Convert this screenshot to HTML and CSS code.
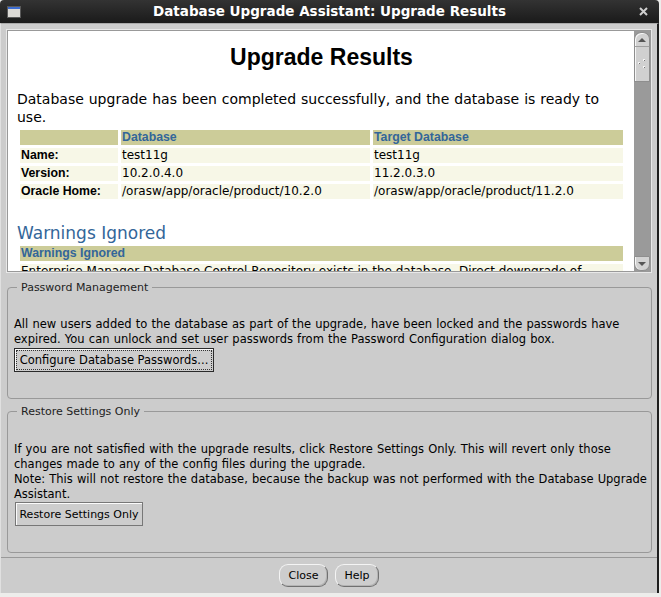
FILE: index.html
```html
<!DOCTYPE html>
<html>
<head>
<meta charset="utf-8">
<title>Database Upgrade Assistant: Upgrade Results</title>
<link rel="stylesheet" href="styles.css">
</head>
<body>
<div class="window">
  <div class="titlebar">
    <svg class="winicon" width="14" height="12" viewBox="0 0 14 12"><rect x="0.5" y="0.5" width="13" height="11" fill="#dcdad6" stroke="#5a5a5a"/><rect x="1" y="1" width="12" height="2" fill="#3c6cd0"/></svg>
    <div class="title">Database Upgrade Assistant: Upgrade Results</div>
    <svg class="close" width="9" height="9" viewBox="0 0 9 9"><path d="M1 1L8 8M8 1L1 8" stroke="#cfcfcf" stroke-width="2"/></svg>
  </div>
  <div class="client">
    <div class="scrollpane">
      <div class="scroll-inner">
        <div class="viewport">
          <h1 class="doc-title">Upgrade Results</h1>
          <p class="lead">Database upgrade has been completed successfully, and the database is ready to use.</p>
          <table class="info">
            <colgroup><col class="c1"><col class="c2"><col class="c3"></colgroup>
            <tr><th></th><th>Database</th><th>Target Database</th></tr>
            <tr><td class="label">Name:</td><td>test11g</td><td>test11g</td></tr>
            <tr><td class="label">Version:</td><td>10.2.0.4.0</td><td>11.2.0.3.0</td></tr>
            <tr><td class="label">Oracle Home:</td><td>/orasw/app/oracle/product/10.2.0</td><td>/orasw/app/oracle/product/11.2.0</td></tr>
          </table>
          <h2 class="section">Warnings Ignored</h2>
          <table class="warn">
            <tr><th>Warnings Ignored</th></tr>
            <tr><td>Enterprise Manager Database Control Repository exists in the database. Direct downgrade of Enterprise Manager is not supported.</td></tr>
          </table>
        </div>
        <div class="vscroll">
          <div class="sb-up"><span class="tri-up"></span></div>
          <div class="sb-thumb">
            <svg width="8" height="10" viewBox="0 0 8 10"><rect x="5" y="0" width="2" height="2" fill="#f4f4f4"/><rect x="6" y="1" width="1" height="1" fill="#777"/><rect x="0" y="3" width="2" height="2" fill="#f4f4f4"/><rect x="1" y="4" width="1" height="1" fill="#777"/><rect x="5" y="7" width="2" height="2" fill="#f4f4f4"/><rect x="6" y="8" width="1" height="1" fill="#777"/></svg>
          </div>
          <div class="sb-track"></div>
          <div class="sb-down"><span class="tri-down"></span></div>
        </div>
      </div>
    </div>

    <fieldset class="group">
      <legend>Password Management</legend>
      <p class="msg">All new users added to the database as part of the upgrade, have been locked and the passwords have expired. You can unlock and set user passwords from the Password Configuration dialog box.</p>
      <button class="btn btn-default btn-configure"><span class="focus">Configure Database Passwords...</span></button>
    </fieldset>

    <fieldset class="group group-restore">
      <legend>Restore Settings Only</legend>
      <p class="msg msg-lines">If you are not satisfied with the upgrade results, click Restore Settings Only. This will revert only those<br>changes made to any of the config files during the upgrade.<br>Note: This will not restore the database, because the backup was not performed with the Database Upgrade<br>Assistant.</p>
      <button class="btn btn-restore">Restore Settings Only</button>
    </fieldset>

    <div class="separator"></div>

    <div class="actions">
      <button class="btn-round btn-close">Close</button>
      <button class="btn-round btn-help">Help</button>
    </div>
  </div>
</div>
</body>
</html>
```
FILE: styles.css
```css
* { box-sizing: border-box; }
html, body { margin: 0; padding: 0; }
body {
  background: #ededeb;
  width: 661px;
  height: 597px;
  overflow: hidden;
  font-family: "DejaVu Sans", sans-serif;
  color: #000;
}
.window {
  width: 659px;
  height: 593px;
  display: flex;
  flex-direction: column;
}
.titlebar {
  height: 23px;
  flex: none;
  background: linear-gradient(#333333, #1a1a1a);
  border-radius: 4px 4px 0 0;
  display: grid;
  grid-template-columns: 1fr auto 1fr;
  align-items: center;
}
.winicon { justify-self: start; margin-left: 7px; display: block; }
.title {
  color: #ffffff;
  font-weight: bold;
  font-size: 13.5px;
  line-height: 23px;
  white-space: nowrap;
}
.close { justify-self: end; margin-right: 11px; display: block; }

.client {
  flex: 1;
  background: #cccccc;
  border-top: 1px solid #a9a9a9;
  border-left: 1px solid #e0e0e0;
  border-right: 2px solid #1e1e1e;
  display: flex;
  flex-direction: column;
}

.scrollpane {
  margin: 5px 5px 0 5px;
  height: 244px;
  flex: none;
  border: 1px solid #e8e8e8;
}
.scroll-inner {
  height: 100%;
  border: 1px solid #999999;
  display: flex;
}
.viewport {
  flex: 1;
  background: #ffffff;
  overflow: hidden;
  padding: 0 8px 0 9px;
}
.doc-title {
  margin: 13px 0 0;
  font-family: "Liberation Sans", sans-serif;
  font-weight: bold;
  font-size: 23px;
  line-height: 26px;
  text-align: center;
}
.lead {
  margin: 21px 0 1px;
  font-size: 14px;
  word-spacing: 0.5px;
  line-height: 17.5px;
}
.info, .warn {
  border-collapse: separate;
  border-spacing: 3px;
  width: 609px;
  margin: 0;
  table-layout: fixed;
}
.info .c1 { width: 98px; }
.info .c2 { width: 249px; }
.info .c3 { width: 250px; }
.info th, .info td, .warn th, .warn td {
  height: 15px;
  padding: 0 1px;
  line-height: 15px;
  text-align: left;
  vertical-align: top;
  white-space: nowrap;
  overflow: hidden;
}
.info th, .warn th {
  background: #cccc99;
  color: #336699;
  font-family: "Liberation Sans", sans-serif;
  font-weight: bold;
  font-size: 12.3px;
}
.info td, .warn td {
  background: #f7f7e7;
  font-size: 12px;
}
.warn td { white-space: normal; }
.info td.label {
  font-family: "Liberation Sans", sans-serif;
  font-weight: bold;
  font-size: 12.3px;
}
.section {
  margin: 21px 0 0;
  font-size: 17px;
  line-height: 20px;
  font-weight: normal;
  color: #336699;
}

.vscroll {
  width: 16px;
  flex: none;
  display: flex;
  flex-direction: column;
  background: #9a9a9a;
  padding-top: 1px;
}
.sb-up, .sb-down {
  height: 15px;
  flex: none;
  background: #d2d2d2;
  border: 1px solid #8e8e8e;
  display: flex;
  align-items: center;
  justify-content: center;
}
.sb-up {
  border-radius: 7px 7px 0 0;
  border-bottom-color: #a0a0a0;
  box-shadow: inset 1px 1px 0 #f6f6f6;
}
.sb-down {
  border-radius: 0 0 7px 7px;
  box-shadow: inset 1px 0 0 #f6f6f6;
}
.tri-up {
  width: 0; height: 0;
  border-left: 4px solid transparent;
  border-right: 4px solid transparent;
  border-bottom: 4px solid #555555;
}
.tri-down {
  width: 0; height: 0;
  border-left: 4px solid transparent;
  border-right: 4px solid transparent;
  border-top: 4px solid #555555;
}
.sb-thumb {
  height: 35px;
  flex: none;
  background: #d0d0d0;
  border: 1px solid #8e8e8e;
  border-top: none;
  box-shadow: inset 1px 0 0 #f6f6f6;
  display: flex;
  align-items: center;
  justify-content: center;
}
.sb-track { flex: 1; }

.group {
  margin: 7px 5px 0 6px;
  border: 1px solid #999999;
  border-radius: 4px;
  padding: 22px 6px 26px;
  min-width: 0;
}
.group-restore { margin-top: 5px; padding-top: 23px; }
.group legend {
  margin-left: 3px;
  padding: 0 4px;
  font-size: 11px;
  line-height: 15px;
  color: #222222;
}
.msg {
  margin: 0;
  font-size: 11.5px;
  word-spacing: 0.5px;
  line-height: 15px;
}
.msg-lines { white-space: nowrap; }

.btn {
  display: block;
  height: 24px;
  padding: 0;
  background: #cdcdcd;
  font-family: "DejaVu Sans", sans-serif;
  font-size: 11px;
  color: #000;
  border: 1px solid #777777;
  box-shadow: inset 1px 1px 0 #fbfbfb;
  border-radius: 0;
}
.btn-configure {
  margin-top: 1px;
  width: 200px;
  border-color: #2a2a2a;
  padding: 1px;
  font-size: 11.5px;
}
.btn-configure .focus {
  display: block;
  height: 100%;
  border: 1px dotted #333333;
  line-height: 18px;
  text-align: center;
}
.btn-restore {
  margin-left: 1px;
  width: 128px;
}

.separator {
  margin-top: 4px;
  height: 1px;
  flex: none;
  background: #999999;
}
.actions {
  margin-top: 6px;
  display: flex;
  justify-content: center;
  gap: 7px;
}
.btn-round {
  height: 23px;
  padding: 0;
  background: #cdcdcd;
  border: 1px solid;
  border-color: #f4f4f4 #707070 #707070 #f4f4f4;
  border-radius: 9px;
  box-shadow: inset -1px -1px 0 #b4b4b4;
  font-family: "DejaVu Sans", sans-serif;
  font-size: 11px;
  color: #000;
}
.btn-close { width: 49px; }
.btn-help { width: 44px; }
```
